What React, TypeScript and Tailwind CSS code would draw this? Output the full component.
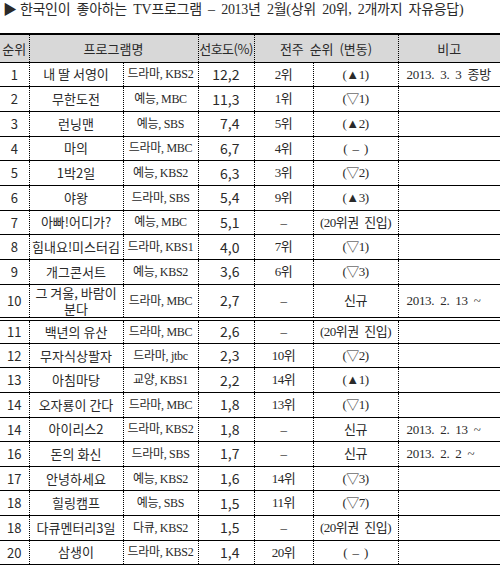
import clsx from 'clsx';

interface Row {
    rank: string;
    name: string;
    channel: string;
    pref: string;
    prev: string;
    change: string;
    note?: string;
    tall?: boolean;
    split?: boolean;
}

const rows: Row[] = [
    { rank: '1', name: '내 딸 서영이', channel: '드라마, KBS2', pref: '12,2', prev: '2위', change: '(▲1)', note: '2013. 3. 3 종방' },
    { rank: '2', name: '무한도전', channel: '예능, MBC', pref: '11,3', prev: '1위', change: '(▽1)' },
    { rank: '3', name: '런닝맨', channel: '예능, SBS', pref: '7,4', prev: '5위', change: '(▲2)' },
    { rank: '4', name: '마의', channel: '드라마, MBC', pref: '6,7', prev: '4위', change: '(  –  )' },
    { rank: '5', name: '1박2일', channel: '예능, KBS2', pref: '6,3', prev: '3위', change: '(▽2)' },
    { rank: '6', name: '야왕', channel: '드라마, SBS', pref: '5,4', prev: '9위', change: '(▲3)' },
    { rank: '7', name: '아빠!어디가?', channel: '예능, MBC', pref: '5,1', prev: '–', change: '(20위권  진입)' },
    { rank: '8', name: '힘내요!미스터김', channel: '드라마, KBS1', pref: '4,0', prev: '7위', change: '(▽1)' },
    { rank: '9', name: '개그콘서트', channel: '예능, KBS2', pref: '3,6', prev: '6위', change: '(▽3)' },
    { rank: '10', name: '그 겨울, 바람이 분다', channel: '드라마, MBC', pref: '2,7', prev: '–', change: '신규', note: '2013. 2. 13 ~', tall: true, split: true },
    { rank: '11', name: '백년의 유산', channel: '드라마, MBC', pref: '2,6', prev: '–', change: '(20위권  진입)' },
    { rank: '12', name: '무자식상팔자', channel: '드라마, jtbc', pref: '2,3', prev: '10위', change: '(▽2)' },
    { rank: '13', name: '아침마당', channel: '교양, KBS1', pref: '2,2', prev: '14위', change: '(▲1)' },
    { rank: '14', name: '오자룡이 간다', channel: '드라마, MBC', pref: '1,8', prev: '13위', change: '(▽1)' },
    { rank: '14', name: '아이리스2', channel: '드라마, KBS2', pref: '1,8', prev: '–', change: '신규', note: '2013. 2. 13 ~' },
    { rank: '16', name: '돈의 화신', channel: '드라마, SBS', pref: '1,7', prev: '–', change: '신규', note: '2013. 2. 2 ~' },
    { rank: '17', name: '안녕하세요', channel: '예능, KBS2', pref: '1,6', prev: '14위', change: '(▽3)' },
    { rank: '18', name: '힐링캠프', channel: '예능, SBS', pref: '1,5', prev: '11위', change: '(▽7)' },
    { rank: '18', name: '다큐멘터리3일', channel: '다큐, KBS2', pref: '1,5', prev: '–', change: '(20위권  진입)' },
    { rank: '20', name: '삼생이', channel: '드라마, KBS2', pref: '1,4', prev: '20위', change: '(  –  )' },
];

const sans = 'font-["Noto_Sans_CJK_KR",sans-serif]';
const serif = 'font-["Liberation_Serif","Noto_Sans_CJK_KR",serif]';
const vline = 'border-l border-dotted border-black';

const App = () => {
    return (
        <div className="w-[500px] h-[572px] bg-white text-[#2a2a2a] overflow-hidden">
            <div className={clsx('h-[33px] pl-[3px] pt-px text-[14px] leading-[18px] whitespace-pre tracking-[-0.3px]', serif)}>
                ▶ 한국인이  좋아하는  TV프로그램  –  2013년  2월(상위  20위,  2개까지  자유응답)
            </div>
            <table className="w-full table-fixed border-collapse text-[13px]">
                <colgroup>
                    <col className="w-[29px]" />
                    <col className="w-[94px]" />
                    <col className="w-[75px]" />
                    <col className="w-[56px]" />
                    <col className="w-[59px]" />
                    <col className="w-[85px]" />
                    <col className="w-[102px]" />
                </colgroup>
                <thead>
                    <tr className={clsx('h-[28px] bg-[#d8d8d8] border-t-2 border-b border-black', sans)}>
                        <th className="font-normal text-center">순위</th>
                        <th colSpan={2} className={clsx('font-normal text-center', vline)}>프로그램명</th>
                        <th className={clsx('font-normal text-center tracking-[-0.5px]', vline)}>선호도(%)</th>
                        <th colSpan={2} className={clsx('font-normal text-center whitespace-pre', vline)}>전주  순위  (변동)</th>
                        <th className={clsx('font-normal text-center', vline)}>비고</th>
                    </tr>
                </thead>
                <tbody>
                    {rows.map((row, i) => (
                        <tr
                            key={i}
                            className={clsx(
                                'border-b border-black',
                                row.tall ? 'h-[34px]' : i < 9 ? 'h-[24.7px]' : 'h-[24.6px]',
                                row.split && 'border-b-[4px] border-double'
                            )}
                        >
                            <td className={clsx('text-center p-0', sans)}>{row.rank}</td>
                            <td className={clsx('text-center p-0 leading-[16px] whitespace-pre-wrap', sans, vline)}>
                                {row.name}
                            </td>
                            <td className={clsx('text-center p-0 text-[12px] tracking-[-0.3px] whitespace-nowrap', serif, vline)}>
                                {row.channel}
                            </td>
                            <td className={clsx('text-right p-0 pr-[14px] text-[14px]', sans, vline)}>{row.pref}</td>
                            <td className={clsx('text-center p-0 tracking-[-0.5px]', serif, vline)}>{row.prev}</td>
                            <td className={clsx('text-center p-0 whitespace-pre tracking-[-0.5px]', serif, vline)}>
                                {row.change}
                            </td>
                            <td className={clsx('p-0 pl-[8px] whitespace-pre tracking-[-0.3px] [word-spacing:3px]', serif, vline)}>
                                {row.note}
                            </td>
                        </tr>
                    ))}
                </tbody>
            </table>
        </div>
    );
};

export default App;
